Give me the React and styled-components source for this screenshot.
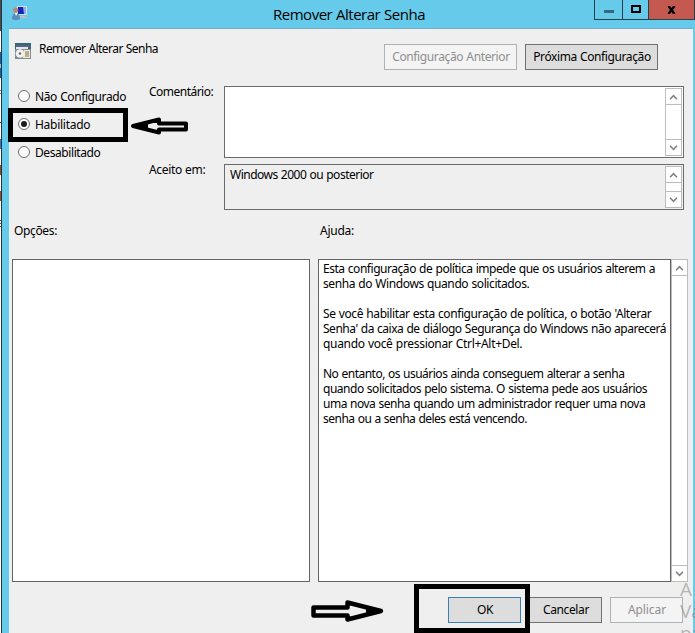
import React from 'react';
import styled, { createGlobalStyle, css } from 'styled-components';

const Global = createGlobalStyle`
  * { box-sizing: border-box; }
  html, body { margin: 0; padding: 0; overflow: hidden; }
  body { font: 12px/15px "Noto Sans", "Open Sans", sans-serif; color: #000; }
`;

const Screen = styled.div`
  position: relative;
  display: grid;
  grid-template-columns: 1px 1px minmax(0, 1fr);
  width: 695px;
  height: 633px;
  overflow: hidden;
  background: #66caea;
`;

const Backdrop = styled.div`
  background: linear-gradient(
    #4b4b4d 0 31px, #fff 31px 52px, #0b64b0 52px 64px, #9cc4e6 64px 68px,
    #0b64b0 68px 78px, #fff 78px 90px, #777 90px 91px, #fff 91px 93px,
    #777 93px 94px, #fff 94px 122px, #444 122px 123px, #fff 123px 139px,
    #2c80c8 139px 149px, #fff 149px 165px, #8f4a28 165px 175px, #fff 175px 191px,
    #9d4b24 191px 201px, #fff 201px 220px, #555 220px 221px, #fff 221px 223px,
    #555 223px 224px, #fff 224px 226px, #555 226px 227px, #fff 227px
  );
`;

const Edge = styled.div`
  background: #26333c;
`;

const Window = styled.section`
  display: flex;
  flex-direction: column;
  padding: 0 2px 0 7px;
  background: #66caea;
`;

const TitleBar = styled.header`
  display: grid;
  grid-template-columns: 1fr auto 1fr;
  height: 28px;
  flex: none;
  margin-right: -2px;
`;

const AppIcon = styled.svg`
  width: 16px;
  height: 16px;
  margin: 5px 0 0 3px;
`;

const Title = styled.h1`
  margin: 0 3px 0 -3px;
  font: 400 15px/28px "Open Sans", sans-serif;
  letter-spacing: -0.49px;
  word-spacing: 0.4px;
`;

const Controls = styled.div`
  display: flex;
  justify-self: end;
  height: 20px;
  border: solid #27414c;
  border-width: 0 1px 1px;
`;

const Control = styled.button`
  display: flex;
  align-items: center;
  justify-content: center;
  width: ${(p) => p.$w}px;
  padding: 0;
  border: solid #27414c;
  border-width: 0 ${(p) => (p.$close ? 0 : 1)}px 0 0;
  background: ${(p) => (p.$close ? '#c4594f' : '#66caea')};
`;

const Client = styled.main`
  display: flex;
  flex-direction: column;
  flex: 1;
  border-top: 1px solid #78aac8;
  background: #efefef;
`;

const Text = styled.span`
  white-space: pre;
  letter-spacing: ${(p) => p.$ls || 0}px;
  word-spacing: 0.5px;
`;

const PolicyHeader = styled.div`
  display: flex;
  align-items: flex-start;
  height: 57px;
  padding: 14px 0 0 6px;
`;

const PolicyIcon = styled.svg`
  flex: none;
  width: 16px;
  height: 16px;
`;

const PolicyName = styled.div`
  flex: 1;
  margin: -2px 0 0 8px;
`;

const NavButtons = styled.div`
  display: flex;
  gap: 8px;
  margin: 1px 35px 0 0;
`;

const Button = styled.button`
  width: ${(p) => p.$w}px;
  height: 26px;
  padding: 0 0 1px 1px;
  border: 1px solid #707070;
  background: #ddd;
  color: #000;
  font: inherit;
  line-height: 23px;
  ${(p) => p.$focus && css`border-color: #3c7fb1;`}
  ${(p) => p.disabled && css`
    border-color: #adb2b5;
    background: #f4f4f4;
    color: #8f8f8f;
  `}
`;

const Form = styled.div`
  display: grid;
  grid-template-columns: 140px 75px 460px;
  height: 124px;
`;

const Radios = styled.div`
  display: flex;
  flex-direction: column;
  gap: 12px;
  padding: 2px 0 0 9px;
`;

const RadioLabel = styled.label`
  display: flex;
  align-items: center;
  gap: 5px;
  height: 16px;
`;

const RadioDot = styled.i`
  display: flex;
  align-items: center;
  justify-content: center;
  width: 12px;
  height: 12px;
  border: 1px solid #6c6c6c;
  border-radius: 50%;
  background: #fff;
  &::after {
    content: "";
    width: 6px;
    height: 6px;
    border-radius: 50%;
    background: ${(p) => (p.$on ? '#1c1c1c' : 'transparent')};
  }
`;

const Labels = styled.div`
  display: grid;
  grid-template-rows: 78px 1fr;
  margin-top: -2px;
`;

const Fields = styled.div`
  display: grid;
  grid-template-rows: 72px 46px;
  gap: 6px;
`;

const Field = styled.div`
  display: flex;
  justify-content: space-between;
  padding: 1px;
  border: 1px solid #6b6b6b;
  background: ${(p) => (p.$readOnly ? '#efefef' : '#fff')};
`;

const FieldText = styled.div`
  padding: 1px 0 0 4px;
`;

const Scroll = styled.div`
  display: flex;
  flex-direction: column;
  justify-content: space-between;
  width: 17px;
  border: 1px solid #bcbcbc;
  background: #fff;
`;

const ScrollButton = styled.div`
  display: flex;
  align-items: center;
  justify-content: center;
  height: 16px;
  border: solid #bcbcbc;
  border-width: ${(p) => (p.$down ? '1px 0 0' : '0 0 1px')};
`;

const Captions = styled.div`
  display: grid;
  grid-template-columns: 306px 1fr;
  height: 49px;
  padding: 13px 0 0 5px;
`;

const Panels = styled.div`
  display: grid;
  grid-template-columns: 298px 8px 353px 17px;
  height: 323px;
  padding-left: 3px;
`;

const Panel = styled.div`
  border: 1px solid #646464;
  background: #fff;
`;

const HelpPanel = styled(Panel)`
  grid-column: 3;
  display: flex;
  flex-direction: column;
  padding: 1px 0 0 4px;
`;

const HelpGroup = styled.p`
  display: flex;
  flex-direction: column;
  margin: 0 0 15px;
`;

const Footer = styled.footer`
  display: flex;
  justify-content: flex-end;
  gap: 8px;
  padding: 15px 10px 0 0;
`;

const Frame = styled.div`
  position: absolute;
  left: ${(p) => p.$x}px;
  top: ${(p) => p.$y}px;
  width: ${(p) => p.$w}px;
  height: ${(p) => p.$h}px;
  border: 5px solid #000;
`;

const Arrow = styled.svg`
  position: absolute;
  left: ${(p) => p.$x}px;
  top: ${(p) => p.$y}px;
  fill: none;
  stroke: #000;
  stroke-linejoin: round;
`;

const Watermark = styled.div`
  position: absolute;
  left: 680px;
  top: 578px;
  font: 19px/22px "Open Sans", sans-serif;
  color: rgba(120, 120, 120, 0.5);
  white-space: pre;
`;

function Chevron({ down }) {
  return (
    <svg width="9" height="6" viewBox="0 0 9 6" fill="none" stroke="#838383" strokeWidth="1.6">
      <path d={down ? 'M1 .8 4.5 4.3 8 .8' : 'M1 5.2 4.5 1.7 8 5.2'} />
    </svg>
  );
}

function ScrollBar() {
  return (
    <Scroll>
      <ScrollButton><Chevron /></ScrollButton>
      <ScrollButton $down><Chevron down /></ScrollButton>
    </Scroll>
  );
}

const options = [
  ['Não Configurado', -0.4],
  ['Habilitado', -0.27],
  ['Desabilitado', -0.42],
];

const help = [
  [
    ['Esta configuração de política impede que os usuários alterem a', -0.46],
    ['senha do Windows quando solicitados.', -0.4],
  ],
  [
    ["Se você habilitar esta configuração de política, o botão 'Alterar", -0.4],
    ["Senha' da caixa de diálogo Segurança do Windows não aparecerá", -0.48],
    ['quando você pressionar Ctrl+Alt+Del.', -0.32],
  ],
  [
    ['No entanto, os usuários ainda conseguem alterar a senha', -0.51],
    ['quando solicitados pelo sistema. O sistema pede aos usuários', -0.48],
    ['uma nova senha quando um administrador requer uma nova', -0.49],
    ['senha ou a senha deles está vencendo.', -0.51],
  ],
];

export default function App() {
  return (
    <Screen>
      <Global />
      <Backdrop />
      <Edge />
      <Window>
        <TitleBar>
          <AppIcon viewBox="0 0 16 16">
            <path d="M5 1h10v9H5z" fill="#d9dde0" />
            <path d="M6 2h8v7H6z" fill="#1226b8" />
            <path d="M11 2h3v7h-2z" fill="#8fa8ee" />
            <path d="M8 11h5v1h2v1H7z" fill="#b9c0bd" />
            <circle cx="3.7" cy="5" r="2.6" fill="#b9896a" />
            <path d="M0 14c0-4 2-6 4-6s4 2 4 6c-2 1.500-6 1.500-8 0z" fill="#5c8ebd" />
            <path d="m3 8 1 3 1.500-3z" fill="#fff" />
          </AppIcon>
          <Title>Remover Alterar Senha</Title>
          <Controls>
            <Control $w={28} aria-label="Minimizar">
              <svg width="10" height="20"><path d="M0 10h10v3H0z" fill="#36697a" /></svg>
            </Control>
            <Control $w={26} aria-label="Maximizar">
              <svg width="10" height="20"><path d="M1 6h8v6H1z" fill="none" stroke="#000" strokeWidth="2" /></svg>
            </Control>
            <Control $w={45} $close aria-label="Fechar">
              <svg width="9" height="8" viewBox="0 0 9 8"><path d="m1.500 0 6 8M7.500 0l-6 8" stroke="#000" strokeWidth="2.400" /></svg>
            </Control>
          </Controls>
        </TitleBar>
        <Client>
          <PolicyHeader>
            <PolicyIcon viewBox="0 0 16 16">
              <path d="M0 0h16v16H0z" fill="#2f6a6e" />
              <path d="M1 2h14v3H1z" fill="#59628a" />
              <path d="M1 4h12v2H1z" fill="#e4e8ea" />
              <path d="M0 6h16v10H0z" fill="#858b8f" />
              <circle cx="5" cy="10.500" r="4.300" fill="#f0f2f2" />
              <circle cx="5" cy="10.500" r="1.200" fill="#666" />
              <path d="M9 7h6v8H8z" fill="#f3ecd0" />
              <path d="M10 9h4M10 11h4M10 13h4" stroke="#77705e" />
            </PolicyIcon>
            <PolicyName><Text $ls={-0.56}>Remover Alterar Senha</Text></PolicyName>
            <NavButtons>
              <Button $w={133} disabled><Text $ls={-0.38}>Configuração Anterior</Text></Button>
              <Button $w={133}><Text $ls={-0.4}>Próxima Configuração</Text></Button>
            </NavButtons>
          </PolicyHeader>
          <Form>
            <Radios>
              {options.map(([name, ls], i) => (
                <RadioLabel key={name}>
                  <RadioDot $on={i === 1} />
                  <Text $ls={ls}>{name}</Text>
                </RadioLabel>
              ))}
            </Radios>
            <Labels>
              <Text $ls={-0.52}>Comentário:</Text>
              <Text $ls={-0.34}>Aceito em:</Text>
            </Labels>
            <Fields>
              <Field>
                <FieldText />
                <ScrollBar />
              </Field>
              <Field $readOnly>
                <FieldText><Text $ls={-0.5}>Windows 2000 ou posterior</Text></FieldText>
                <ScrollBar />
              </Field>
            </Fields>
          </Form>
          <Captions>
            <Text $ls={-0.36}>Opções:</Text>
            <Text $ls={-0.25}>Ajuda:</Text>
          </Captions>
          <Panels>
            <Panel />
            <HelpPanel>
              {help.map((lines, i) => (
                <HelpGroup key={i}>
                  {lines.map(([line, ls]) => <Text key={line} $ls={ls}>{line}</Text>)}
                </HelpGroup>
              ))}
            </HelpPanel>
            <ScrollBar />
          </Panels>
          <Footer>
            <Button $w={73} $focus><Text $ls={-0.4}>OK</Text></Button>
            <Button $w={73}><Text $ls={-0.37}>Cancelar</Text></Button>
            <Button $w={73} disabled><Text $ls={-0.1}>Aplicar</Text></Button>
          </Footer>
        </Client>
      </Window>
      <Frame $x={8} $y={108} $w={120} $h={34} />
      <Frame $x={414} $y={584} $w={116} $h={49} />
      <Arrow $x={128} $y={114} width="64" height="24" strokeWidth="4">
        <path d="M5 12 31 5.500v4h27v6H31v3z" />
        <path d="M4 12 20 9v6z" fill="#000" stroke="none" />
      </Arrow>
      <Arrow $x={308} $y={597} width="80" height="28" strokeWidth="4.5">
        <path d="M5.500 10.500h34v-5L73 14 39.500 22.500v-4h-34z" />
        <path d="m74 14-16-4v8z" fill="#000" stroke="none" />
      </Arrow>
      <Watermark>{'A\nVa\npa'}</Watermark>
    </Screen>
  );
}
